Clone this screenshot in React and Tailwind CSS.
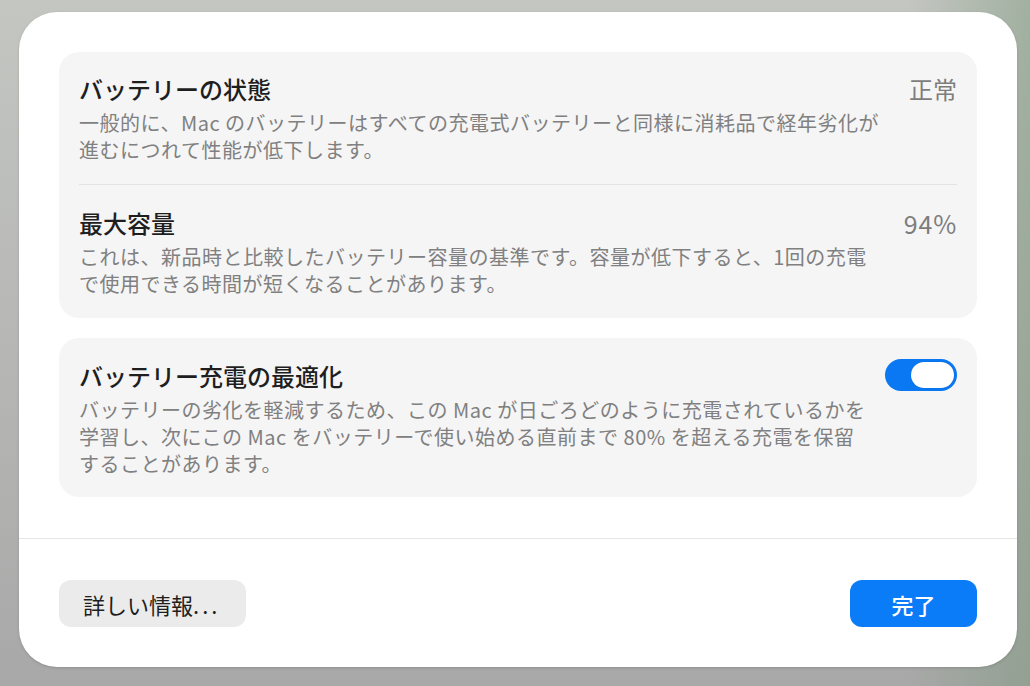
import React from "react";

function Row({ title, value, lines, pt, pb, right, valueClass = "text-[24px]" }) {
  return (
    <div className={`flex items-start justify-between ${pt} ${pb}`}>
      <div className="flex flex-col gap-[6px]">
        <div className="text-[24px] leading-[28px] font-medium text-[#1e1e1e] whitespace-nowrap">
          {title}
        </div>
        <div className="text-[20px] leading-[27px] tracking-[0.5px] text-[#808080] whitespace-nowrap">
          {lines.map((l, i) => (
            <div key={i}>{l}</div>
          ))}
        </div>
      </div>
      {value && (
        <div className={`leading-[28px] text-[#7d7d7d] whitespace-nowrap ${valueClass}`}>{value}</div>
      )}
      {right}
    </div>
  );
}

function Toggle() {
  return (
    <div className="-mt-[3px] w-[72px] h-[32px] rounded-full bg-[#0a78f2] p-[3px] flex justify-end shrink-0">
      <div className="w-[43px] h-[26px] rounded-full bg-white shadow-[0_0_1px_rgba(0,0,0,0.3)]" />
    </div>
  );
}

export default function App() {
  return (
    <div className="w-[1030px] h-[686px] overflow-hidden pt-[12px] pl-[19px] font-['Noto_Sans_CJK_JP','Noto_Sans',sans-serif] bg-[linear-gradient(90deg,rgba(255,255,255,0)_88%,rgba(120,150,120,0.45)_100%),linear-gradient(180deg,#c4c6c2_0%,#b8b9b7_45%,#a8a8a8_100%)]">
      <div className="w-[998px] h-[655px] bg-white rounded-[38px] shadow-[0_1px_3px_rgba(0,0,0,0.15)] flex flex-col">
        <div className="px-[40px] pt-[40px] pb-[41px] flex flex-col gap-[20px]">
          <div className="bg-[#f5f5f5] rounded-[20px] px-[20px]">
            <Row
              title="バッテリーの状態"
              value="正常"
              pt="pt-[23px]"
              pb="pb-[21px]"
              lines={[
                "一般的に、Mac のバッテリーはすべての充電式バッテリーと同様に消耗品で経年劣化が",
                "進むにつれて性能が低下します。",
              ]}
            />
            <div className="h-px bg-[#e3e3e3]" />
            <Row
              title="最大容量"
              value="94%"
              valueClass="text-[25px] tracking-[0.8px]"
              pt="pt-[24px]"
              pb="pb-[21px]"
              lines={[
                "これは、新品時と比較したバッテリー容量の基準です。容量が低下すると、1回の充電",
                "で使用できる時間が短くなることがあります。",
              ]}
            />
          </div>
          <div className="bg-[#f5f5f5] rounded-[20px] px-[20px]">
            <Row
              title="バッテリー充電の最適化"
              pt="pt-[24px]"
              pb="pb-[20px]"
              right={<Toggle />}
              lines={[
                "バッテリーの劣化を軽減するため、この Mac が日ごろどのように充電されているかを",
                "学習し、次にこの Mac をバッテリーで使い始める直前まで 80% を超える充電を保留",
                "することがあります。",
              ]}
            />
          </div>
        </div>
        <div className="h-px bg-[#e5e5e5]" />
        <div className="px-[40px] pt-[41px] flex items-center justify-between">
          <button className="h-[47px] w-[187px] pl-[24px] text-left rounded-[12px] bg-[#ebebeb] text-[22px] text-[#1e1e1e] leading-none whitespace-nowrap">
            詳しい情報<span className="tracking-[3px]">...</span>
          </button>
          <button className="h-[47px] w-[127px] rounded-[12px] bg-[#0a7cf7] text-[22px] font-medium text-white leading-none">
            完了
          </button>
        </div>
      </div>
    </div>
  );
}
